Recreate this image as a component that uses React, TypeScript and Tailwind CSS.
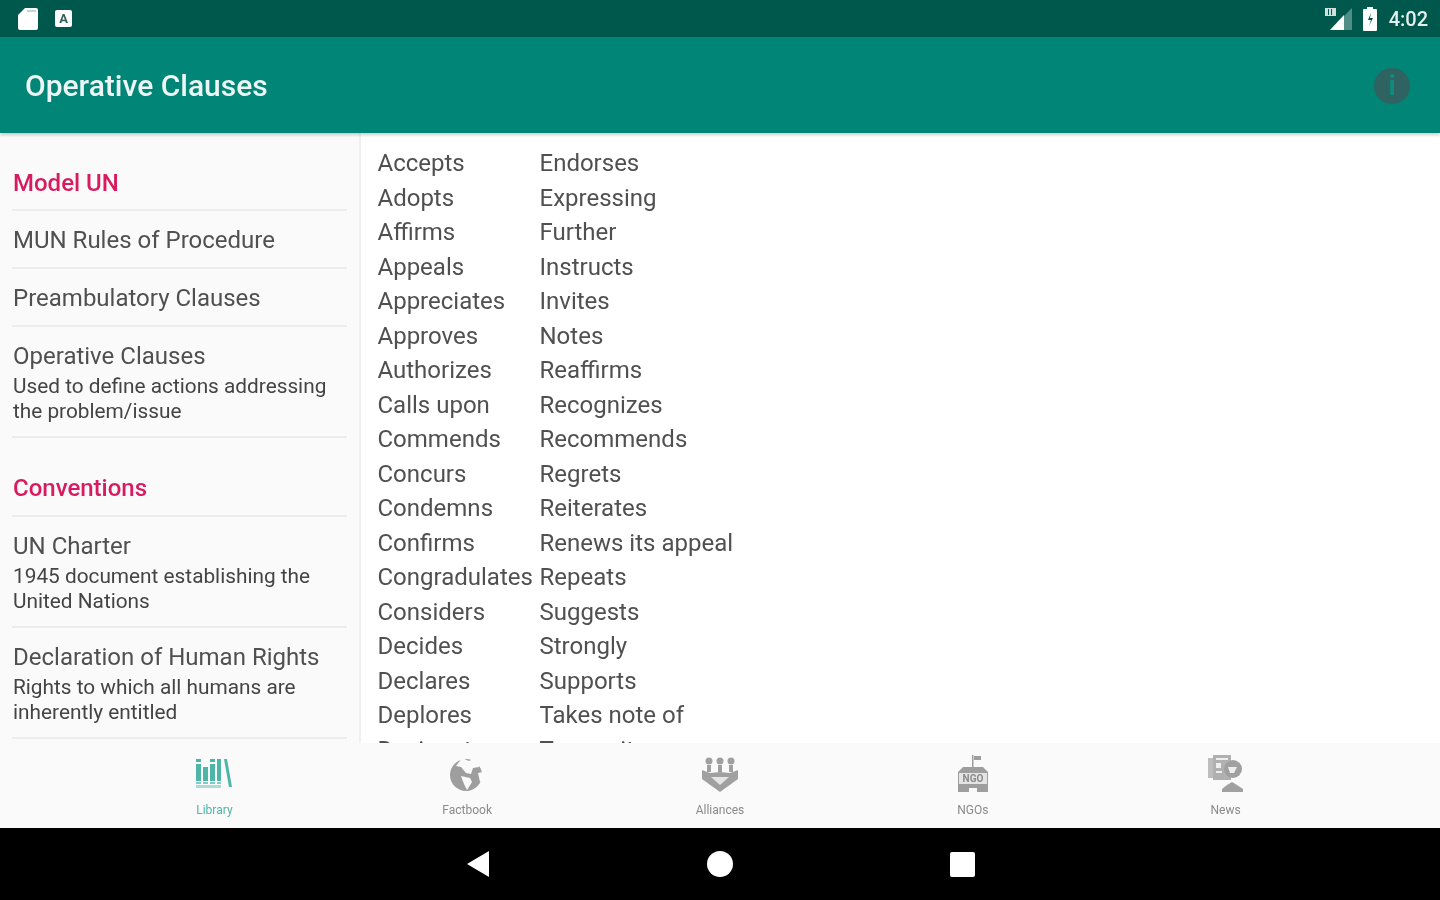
const LEFT_WORDS = [
  "Accepts", "Adopts", "Affirms", "Appeals", "Appreciates", "Approves", "Authorizes", "Calls upon",
  "Commends", "Concurs", "Condemns", "Confirms", "Congradulates", "Considers", "Decides", "Declares",
  "Deplores", "Designates",
];

const RIGHT_WORDS = [
  "Endorses", "Expressing", "Further", "Instructs", "Invites", "Notes", "Reaffirms", "Recognizes",
  "Recommends", "Regrets", "Reiterates", "Renews its appeal", "Repeats", "Suggests", "Strongly", "Supports",
  "Takes note of", "Transmits",
];

function LibraryIcon() {
  return (
    <svg width="38" height="32" viewBox="0 0 38 32" fill="#4db6a6">
      <rect x="1" y="1" width="5" height="3" />
      <rect x="1" y="6" width="5" height="17" />
      <rect x="8" y="9" width="5" height="14" />
      <rect x="15" y="1" width="5" height="3" />
      <rect x="15" y="6" width="5" height="17" />
      <rect x="22" y="1" width="4" height="22" />
      <path d="M29 1h3l5 28h-3z" />
      <rect x="1" y="24" width="5" height="2" opacity="0.7" />
      <rect x="8" y="24" width="5" height="2" opacity="0.7" />
      <rect x="15" y="24" width="5" height="2" opacity="0.7" />
      <rect x="22" y="24" width="4" height="2" opacity="0.7" />
      <rect x="1" y="27" width="25" height="3" opacity="0.45" />
    </svg>
  );
}

function GlobeIcon() {
  return (
    <svg width="36" height="36" viewBox="0 0 36 36">
      <circle cx="17" cy="19" r="16" fill="#9e9e9e" />
      <path d="M13 2l7 3 7-4 4 7-1 3-6 1-2 6-5-1-5-6-5-1zM12 20l9 2 2 4-5 8-3-6zM29 17l5-1-1 9-2 1z" fill="#fafafa" />
    </svg>
  );
}

function AlliancesIcon() {
  return (
    <svg width="38" height="36" viewBox="0 0 38 36" fill="#a0a0a0">
      <circle cx="8" cy="5" r="3.5" />
      <circle cx="19" cy="5" r="3.5" />
      <circle cx="30" cy="5" r="3.5" />
      <rect x="6" y="9" width="4" height="7" />
      <rect x="17" y="9" width="4" height="7" />
      <rect x="28" y="9" width="4" height="7" />
      <path d="M1 14l8 3 10-1 10 1 8-3v9L19 36 1 23z" />
      <path d="M10 21h18l-9 8z" fill="#e4e4e4" />
    </svg>
  );
}

function NgoIcon() {
  return (
    <svg width="32" height="38" viewBox="0 0 32 38" fill="#9e9e9e">
      <rect x="15" y="0" width="1.5" height="12" />
      <rect x="17" y="1" width="7" height="4" />
      <path d="M1 17l5-5h20l5 5v20H20v-4h-8v4H1z" />
      <rect x="2" y="18" width="28" height="11" fill="#e4e4e4" />
      <text x="16" y="27" textAnchor="middle" fontSize="10" fontWeight="700" fill="#8a8a8a">NGO</text>
    </svg>
  );
}

function NewsIcon() {
  return (
    <svg width="38" height="38" viewBox="0 0 38 38" fill="#bdbdbd">
      <rect x="1" y="3" width="5" height="20" />
      <rect x="6" y="0" width="18" height="25" fill="#b0b0b0" />
      <rect x="9" y="3" width="12" height="2" fill="#eeeeee" />
      <rect x="9" y="8" width="5" height="5" fill="#eeeeee" />
      <rect x="9" y="16" width="6" height="2" fill="#eeeeee" />
      <circle cx="26" cy="14" r="9" fill="#a0a0a0" />
      <path d="M21 12h9l-3 6h-4z" fill="#eeeeee" />
      <path d="M15 37v-3l5-4 5-3 5 3 6 4v3z" fill="#a0a0a0" />
    </svg>
  );
}

function TabItem({ label, active, children }: { label: string; active?: boolean; children: React.ReactNode }) {
  return (
    <div className="flex-1 flex flex-col items-center">
      <div className="h-[48px] flex items-center justify-center">{children}</div>
      <span className={`text-[12px] leading-[14px] mt-[5px] ${active ? "text-[#4db6a6]" : "text-[#8a8a8a]"}`}>{label}</span>
    </div>
  );
}

function SideItem({ title, sub }: { title: string; sub?: string }) {
  return (
    <div className="border-b-2 border-[#ececec] pl-px pt-[15px] pb-[12px]">
      <div className="text-[24px] leading-[29px] text-[#505050]">{title}</div>
      {sub && <div className="text-[20.8px] leading-[25px] text-[#444444] mt-[3px]">{sub}</div>}
    </div>
  );
}

function SideHeading({ title, className }: { title: string; className: string }) {
  return (
    <div className={`border-b-2 border-[#ececec] pl-px text-[24px] leading-[29px] font-medium text-[#d81b60] ${className}`}>
      {title}
    </div>
  );
}

export default function App() {
  return (
    <div className="w-[1440px] h-[900px] flex flex-col overflow-hidden font-['Roboto',sans-serif] bg-white blur-[0.7px]">
      <div className="h-[37px] bg-[#00574b] flex items-center justify-between pl-[18px] pr-[12px] shrink-0">
        <div className="flex items-center gap-[17px]">
          <svg width="20" height="22" viewBox="0 0 20 22" fill="#ffffff">
            <path d="M7 0h11a2 2 0 0 1 2 2v18a2 2 0 0 1-2 2H2a2 2 0 0 1-2-2V7z" />
            <rect x="9" y="2" width="9" height="2" fill="#c4d6d3" />
          </svg>
          <div className="w-[17px] h-[17px] bg-white rounded-[2px] flex items-center justify-center text-[13px] leading-none font-bold text-[#2f5f59]">A</div>
        </div>
        <div className="flex items-center">
          <svg width="28" height="24" viewBox="0 0 28 24">
            <path d="M27 1v22H5z" fill="#4f8f87" />
            <path d="M19 8v15H5z" fill="#ffffff" />
            <rect x="0" y="1" width="11" height="8" fill="#cfe0dd" />
            <rect x="3" y="2" width="1" height="6" fill="#00574b" />
            <rect x="6" y="2" width="1" height="6" fill="#00574b" />
          </svg>
          <svg width="16" height="24" viewBox="0 0 16 24" className="ml-[9px]">
            <path d="M5 0h6v2h3a1 1 0 0 1 1 1v20a1 1 0 0 1-1 1H2a1 1 0 0 1-1-1V3a1 1 0 0 1 1-1h3z" fill="#ffffff" />
            <path d="M9 6l-3 7h3l-2 6 4-8H8z" fill="#00574b" />
          </svg>
          <span className="ml-[11px] text-[20px] leading-none font-medium text-[#e6efed]">4:02</span>
        </div>
      </div>

      <div className="h-[96px] bg-[#008577] flex items-center justify-between pl-[25px] pr-[30px] pt-[2px] shrink-0 shadow-[0_2px_3px_rgba(0,0,0,0.2)] z-10">
        <span className="text-[30px] leading-none font-medium text-[#ecf6f4]">Operative Clauses</span>
        <div className="w-[36px] h-[36px] rounded-full bg-[#2f6361] flex items-center justify-center text-[27px] leading-none font-bold text-[#0f8a7c]">i</div>
      </div>

      <div className="flex-1 min-h-0 flex overflow-hidden">
        <div className="w-[361px] shrink-0 bg-[#fafafa] border-r-2 border-[#f0f0f0] pl-[12px] pr-[12px] overflow-hidden">
          <SideHeading title="Model UN" className="pt-[36px] pb-[11px]" />
          <SideItem title="MUN Rules of Procedure" />
          <SideItem title="Preambulatory Clauses" />
          <SideItem title="Operative Clauses" sub="Used to define actions addressing the problem/issue" />
          <SideHeading title="Conventions" className="pt-[36px] pb-[12px]" />
          <SideItem title="UN Charter" sub="1945 document establishing the United Nations" />
          <SideItem title="Declaration of Human Rights" sub="Rights to which all humans are inherently entitled" />
        </div>
        <div className="flex-1 pl-[16.5px] pt-[13px] overflow-hidden">
          <div className="grid grid-cols-[162px_1fr] text-[24px] leading-[34.5px] text-[#505050]">
            {LEFT_WORDS.map((word, i) => (
              <div key={word} className="contents">
                <div className="whitespace-nowrap">{word}</div>
                <div className="whitespace-nowrap">{RIGHT_WORDS[i]}</div>
              </div>
            ))}
          </div>
        </div>
      </div>

      <div className="h-[85px] bg-[#fafafa] flex px-[88px] pt-[7px] shrink-0">
        <TabItem label="Library" active><LibraryIcon /></TabItem>
        <TabItem label="Factbook"><GlobeIcon /></TabItem>
        <TabItem label="Alliances"><AlliancesIcon /></TabItem>
        <TabItem label="NGOs"><NgoIcon /></TabItem>
        <TabItem label="News"><NewsIcon /></TabItem>
      </div>

      <div className="h-[72px] bg-black flex items-center justify-center gap-[216px] shrink-0">
        <svg width="26" height="28" viewBox="0 0 26 28" fill="#ffffff">
          <path d="M24 1v26L2 14z" />
        </svg>
        <div className="w-[26px] h-[26px] rounded-full bg-white" />
        <div className="w-[25px] h-[25px] ml-px rounded-[2px] bg-white" />
      </div>
    </div>
  );
}
